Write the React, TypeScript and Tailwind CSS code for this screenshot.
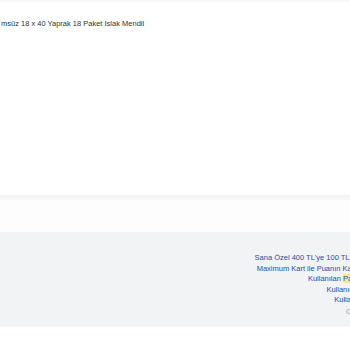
const App = () => {
  return (
    <div className="w-[350px] h-[350px] overflow-hidden bg-white font-['Liberation_Sans',Arial,sans-serif]">
      <div className="h-[195px] flex flex-col">
        <div className="h-[2px] bg-[#f6f6f6]" />
        <p className="mt-[17px] pl-px text-[7.5px] leading-[10px] text-[#333] whitespace-nowrap">
          msüz 18 x 40 Yaprak 18 Paket Islak Mendil
        </p>
      </div>
      <div className="h-[5px] bg-linear-to-b from-[#f2f2f2] to-[#fafafa]" />
      <div className="h-[32px] bg-[#fdfdfd]" />
      <div className="h-[95px] bg-[#f2f3f5] overflow-hidden flex justify-end">
        <div className="shrink-0 mr-[-58px] pt-[21px] text-right text-[7.5px] leading-[10.5px] whitespace-nowrap">
          <p className="text-[#1f4eab]">Sana Özel 400 TL'ye 100 TL MaxiPuan Fırsatı</p>
          <p className="text-[#1f4eab]">Maximum Kart ile Puanın Katlanarak Büyüyor</p>
          <p className="text-[#1f4eab]">
            Kullanılan <span className="bg-[#fce68a]">Pa</span>ralar Geri Ödenir
          </p>
          <p className="text-[#1f4eab]">Kullanım Koşulları Tümü</p>
          <p className="text-[#1f4eab]">Kullanıcı Yorumları (5)</p>
          <p className="mt-[1.5px] text-[#999]">Gizlilik Politikamızı</p>
        </div>
      </div>
    </div>
  );
};

export default App;
